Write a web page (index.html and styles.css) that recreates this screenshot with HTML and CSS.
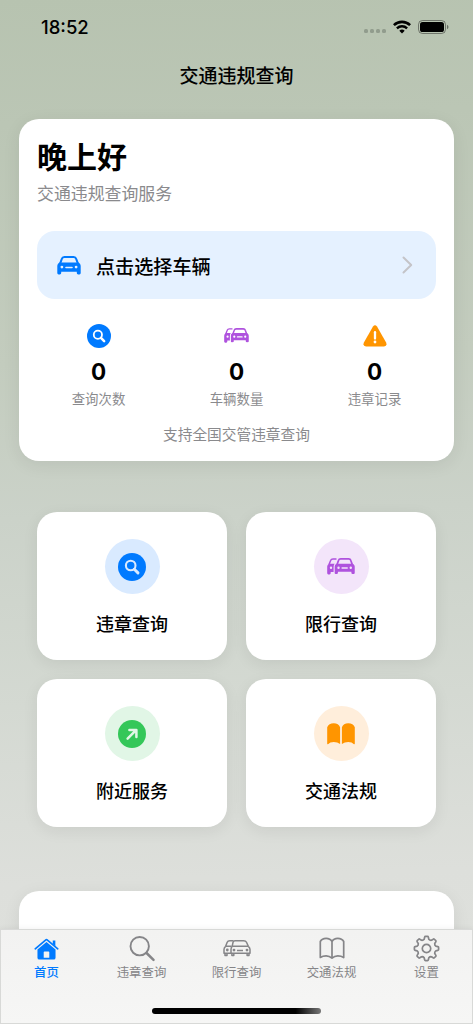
FILE: index.html
```html
<!DOCTYPE html>
<html lang="zh-CN">
<head>
<meta charset="utf-8">
<title>交通违规查询</title>
<link rel="stylesheet" href="styles.css">
</head>
<body>
<svg class="defs" width="0" height="0">
  <defs>
    <symbol id="car" viewBox="0 0 24 19">
      <path d="M3.200 7.400 4.800 2.900Q5.400 1 7.400 1H16.600Q18.600 1 19.200 2.900L20.800 7.400" fill="none" stroke="currentColor" stroke-width="2"/>
      <path fill="currentColor" fill-rule="evenodd" d="M.3 9.800Q.3 7.800 2.400 6.500H21.600Q23.700 7.800 23.700 9.800V17q0 1.400-1.300 1.400h-1.200Q19.800 18.400 19.800 17v-1.200H4.200V17q0 1.400-1.400 1.400H1.600Q.3 18.400.3 17zM4.900 9.700a1.400 1.400 0 1 0 0 2.800 1.400 1.400 0 0 0 0-2.800zM19.100 9.700a1.400 1.400 0 1 0 0 2.800 1.400 1.400 0 0 0 0-2.800zM9 10.700a.8.800 0 0 0 0 1.600h6a.8.800 0 0 0 0-1.600z"/>
    </symbol>
    <symbol id="cars" viewBox="0 0 28 17">
      <path d="M2 6.600 3.600 2.600Q4.200.9 6 .9H9.500" fill="none" stroke="currentColor" stroke-width="1.500"/>
      <path fill="currentColor" fill-rule="evenodd" d="M.2 8.600Q.2 6.800 2 5.700H7.600Q6.600 7.200 6.600 9V13.900H3.700V15.100q0 1.300-1.200 1.300H1.300q-1.100 0-1.100-1.300zM4 8.500a1.200 1.200 0 1 0 0 2.400 1.200 1.200 0 0 0 0-2.400z"/>
      <use href="#car" x="7.300" y="0" width="20.700" height="16.600"/>
    </symbol>
    <symbol id="search" viewBox="0 0 28 28">
      <circle cx="14" cy="14" r="14" fill="currentColor"/>
      <circle cx="12.700" cy="12.500" r="4.800" fill="none" stroke="var(--glyph, #fff)" stroke-width="2.100"/>
      <path d="m16.300 16.200 3.700 3.700" stroke="var(--glyph, #fff)" stroke-width="2.900" stroke-linecap="round"/>
    </symbol>
  </defs>
</svg>
<div class="screen">
  <header class="status">
    <span class="time">18:52</span>
    <span class="signals">
      <i class="dots"><b></b><b></b><b></b><b></b></i>
      <svg class="wifi" viewBox="0 0 18 14" width="18" height="14">
        <path d="M.9 5.100a11.700 11.700 0 0 1 16.200 0" fill="none" stroke="#000" stroke-width="2.600"/>
        <path d="M3.900 8.300a7.400 7.400 0 0 1 10.200 0" fill="none" stroke="#000" stroke-width="2.400"/>
        <path d="M6.300 10.800a4 4 0 0 1 5.400 0L9 13.600z"/>
      </svg>
      <svg class="battery" viewBox="0 0 31 14" width="31" height="14">
        <rect x=".5" y=".5" width="27" height="13" rx="4" fill="none" stroke="#000" stroke-opacity=".4"/>
        <rect x="2" y="2" width="24" height="10" rx="2.600"/>
        <path d="M29 4.700q1.500.8 1.500 2.300T29 9.300z" opacity=".45"/>
      </svg>
    </span>
  </header>
  <h1 class="nav-title">交通违规查询</h1>

  <main class="content">
    <section class="card summary">
      <h2 class="greeting">晚上好</h2>
      <p class="subtitle">交通违规查询服务</p>
      <div class="picker">
        <svg class="picker-car" width="24" height="19"><use href="#car"/></svg>
        <span class="picker-text">点击选择车辆</span>
        <svg class="chevron" width="11" height="18" viewBox="0 0 11 18"><path d="m1.500 1.500 7.700 7.500-7.700 7.500" fill="none" stroke="#c4c4c8" stroke-width="2" stroke-linecap="round" stroke-linejoin="round"/></svg>
      </div>
      <div class="stats">
        <div class="stat">
          <div class="stat-icon blue"><svg width="24" height="24"><use href="#search"/></svg></div>
          <div class="number">0</div><div class="caption">查询次数</div>
        </div>
        <div class="stat">
          <div class="stat-icon purple"><svg width="25" height="15.200"><use href="#cars"/></svg></div>
          <div class="number">0</div><div class="caption">车辆数量</div>
        </div>
        <div class="stat">
          <div class="stat-icon orange"><svg width="24" height="22" viewBox="0 0 24 22"><path fill="currentColor" d="M10 1.500q2-2.600 4 0l9.100 16q1.400 3.700-2.100 4H3q-3.500-.3-2.100-4z"/><path d="M12 7.200v6.400" stroke="#fff" stroke-width="2.300" stroke-linecap="round"/><circle cx="12" cy="17" r="1.400" fill="#fff"/></svg></div>
          <div class="number">0</div><div class="caption">违章记录</div>
        </div>
      </div>
      <p class="note">支持全国交管违章查询</p>
    </section>

    <section class="tiles">
      <div class="tile"><div class="badge blue"><svg width="28" height="28"><use href="#search"/></svg></div><span>违章查询</span></div>
      <div class="tile"><div class="badge purple"><svg width="28" height="17"><use href="#cars"/></svg></div><span>限行查询</span></div>
      <div class="tile"><div class="badge green"><svg width="28" height="28" viewBox="0 0 28 28"><circle cx="14" cy="14" r="14" fill="currentColor"/><path d="m9.600 18.600 8.200-8.200M11.400 10h7v7" fill="none" stroke="#e1f6e6" stroke-width="2.500" stroke-linecap="round" stroke-linejoin="round"/></svg></div><span>附近服务</span></div>
      <div class="tile"><div class="badge orange"><svg width="28" height="22" viewBox="0 0 28 22"><path fill="currentColor" d="M.2 4.200Q1.800.3 6.700.3t6.400 3.900V21Q10.500 19 6.700 19T1 21.200Q.2 21.500.2 20.600zM14.900 4.200Q16.400.3 21.300.3t6.500 3.900v16.400q0 .9-.8.6Q25 19 21.300 19t-6.400 2z"/></svg></div><span>交通法规</span></div>
    </section>

    <section class="card next"></section>
  </main>

  <nav class="tabbar">
    <div class="tab active">
      <svg width="25" height="23" viewBox="0 0 26 24"><path d="M1.300 12.300 12 3.200q1-.9 2 0l10.700 9.100" fill="none" stroke="currentColor" stroke-width="1.800" stroke-linecap="round"/><path fill="currentColor" d="M19.500 3.700h2.700v6l-2.700-2.300zM3.600 13l9.400-7.700 9.400 7.700V21.500q0 2-2 2H5.600q-2 0-2-2zM10.900 15q-.8 0-.8.800v5.700h5.800v-5.700q0-.8-.8-.8z" fill-rule="evenodd"/></svg>
      <span>首页</span>
    </div>
    <div class="tab">
      <svg width="26" height="26" viewBox="0 0 26 26"><circle cx="10.700" cy="10.700" r="9.200" fill="none" stroke="currentColor" stroke-width="1.900"/><path d="m17.500 17.500 7 6.800" stroke="currentColor" stroke-width="2.500" stroke-linecap="round"/></svg>
      <span>违章查询</span>
    </div>
    <div class="tab">
      <svg width="28" height="18" viewBox="0 0 28 18"><g fill="none" stroke="currentColor" stroke-width="1.500" stroke-linejoin="round"><path d="M10 2.800Q10.500 1.200 12 1.200h8.500Q22.800 1.200 23.500 2.800l1.800 4Q27 8.100 27 10v3.800H8V10Q8 8.100 9.200 6.800z"/><path d="M9.200 6.800h16.100M8.900 14v2h1.900v-2M24.100 14v2H26v-2M14 11.100h6"/><path d="M10.400 1.200H6.800Q4.800 1.200 4.200 2.800L2.600 6.800Q1 8 1 10v3.800h7M2.600 6.800h6M2 14v2h2v-2"/></g><g fill="currentColor"><circle cx="4.300" cy="10.500" r="1.400"/><circle cx="11" cy="10.600" r="1.400"/><circle cx="24" cy="10.600" r="1.400"/></g></svg>
      <span>限行查询</span>
    </div>
    <div class="tab">
      <svg width="26" height="22" viewBox="0 0 26 22"><path d="M13 4Q11.300.9 7.100.9T1.300 4V20q2.500-1.600 5.800-1.600T13 20.700q2.500-2.300 5.800-2.300t5.900 1.600V4Q23 .9 18.800.9T13 4zv16.500" fill="none" stroke="currentColor" stroke-width="1.700" stroke-linejoin="round"/></svg>
      <span>交通法规</span>
    </div>
    <div class="tab">
      <svg width="27" height="27" viewBox="-13.500 -13.500 27 27"><path d="M-2.320-9.310-1.870-11.300Q-1.700-12.100-1-12.100H1Q1.700-12.100 1.870-11.300L2.320-9.310Q3.300-8 4.940-8.220L6.670-9.310Q7.350-9.760 7.850-9.260L9.260-7.850Q9.760-7.350 9.310-6.670L8.220-4.940Q8-3.300 9.310-2.320L11.300-1.870Q12.100-1.700 12.100-1V1Q12.100 1.700 11.300 1.870L9.310 2.320Q8 3.300 8.220 4.940L9.310 6.670Q9.760 7.350 9.260 7.850L7.850 9.260Q7.350 9.760 6.670 9.310L4.940 8.220Q3.300 8 2.320 9.310L1.870 11.300Q1.700 12.100 1 12.100H-1Q-1.700 12.100-1.870 11.300L-2.320 9.310Q-3.300 8-4.940 8.220L-6.670 9.310Q-7.350 9.760-7.850 9.260L-9.260 7.850Q-9.760 7.350-9.310 6.670L-8.220 4.940Q-8 3.300-9.310 2.320L-11.300 1.870Q-12.100 1.700-12.100 1V-1Q-12.100-1.700-11.300-1.870L-9.310-2.320Q-8-3.300-8.220-4.940L-9.310-6.670Q-9.760-7.350-9.260-7.850L-7.850-9.260Q-7.350-9.760-6.670-9.310L-4.940-8.220Q-3.300-8-2.320-9.310z" fill="none" stroke="currentColor" stroke-width="1.700" stroke-linejoin="round"/><circle r="4.200" fill="none" stroke="currentColor" stroke-width="1.700"/></svg>
      <span>设置</span>
    </div>
    <div class="home-indicator"></div>
  </nav>
</div>
</body>
</html>
```
FILE: styles.css
```css
* { box-sizing: border-box; margin: 0; padding: 0; }
body { font-family: Inter, "Noto Sans CJK SC", sans-serif; color: #000; }
svg { display: block; }
.defs { position: absolute; }
.screen {
  position: relative;
  width: 473px;
  height: 1024px;
  overflow: hidden;
  background: linear-gradient(178deg, #b7c3b0 0%, #bbc6b5 12%, #c3ccbe 35%, #cbd2c9 50%, #d4d9d2 68%, #dddfdb 85%, #dfe1dd 100%);
}
.status {
  height: 53px;
  padding: 0 24px 0 41px;
  display: flex;
  justify-content: space-between;
  align-items: center;
}
.time { font-size: 18.500px; font-weight: 550; line-height: 22px; }
.signals { display: flex; align-items: center; }
.dots { display: flex; gap: 2px; margin: 9px 7px 0 0; }
.dots b { width: 4px; height: 4px; border-radius: 1.5px; background: #919c8d; }
.wifi { margin-right: 7px; }
.nav-title { height: 66px; padding-top: 10px; font-size: 19px; line-height: 28px; font-weight: 500; text-align: center; }
.content { padding: 0 19px; }
.card { background: #fff; border-radius: 20px; box-shadow: 0 4px 18px rgba(0, 0, 0, .07); }
.summary { height: 342px; padding: 18px 18px 0; }
.greeting { font-size: 30px; line-height: 40px; font-weight: 700; }
.subtitle { margin-top: 5px; font-size: 16.900px; line-height: 24px; color: #8a8a8d; }
.picker {
  margin-top: 25px;
  height: 68px;
  padding: 0 23px 0 20px;
  border-radius: 18px;
  background: #e5f1ff;
  display: flex;
  align-items: center;
}
.picker-car { color: #007aff; }
.picker-text { margin-left: 15px; padding-top: 3px; font-size: 19.100px; line-height: 28px; font-weight: 500; }
.chevron { margin-left: auto; }
.stats { margin-top: 25px; display: grid; grid-template-columns: repeat(3, 1fr); gap: 15px; text-align: center; }
.stat-icon { height: 24px; display: flex; align-items: center; justify-content: center; }
.number { margin-top: 10px; font-size: 22.500px; line-height: 28px; font-weight: 700; }
.caption { margin-top: 3px; font-size: 13.400px; line-height: 20px; color: #8a8a8d; }
.note { margin-top: 15px; font-size: 14.700px; line-height: 22px; color: #8a8a8d; text-align: center; }
.blue { color: #007aff; }
.purple { color: #af52de; }
.orange { color: #ff9500; }
.green { color: #34c759; }
.tiles { margin-top: 51px; padding: 0 18px; display: grid; grid-template-columns: 1fr 1fr; gap: 19px; }
.tile {
  height: 148px;
  padding-top: 27px;
  border-radius: 20px;
  background: #fff;
  box-shadow: 0 4px 16px rgba(0, 0, 0, .07);
  display: flex;
  flex-direction: column;
  align-items: center;
}
.tile span { margin-top: 17px; font-size: 18px; line-height: 27px; font-weight: 500; }
.badge { width: 55px; height: 55px; border-radius: 50%; display: flex; align-items: center; justify-content: center; }
.badge.blue { background: #d9eaff; --glyph: #d9eaff; }
.badge.purple { background: #f3e5fa; }
.badge.green { background: #e1f6e6; }
.badge.orange { background: #ffeedb; }
.next { margin-top: 64px; height: 180px; }
.tabbar {
  position: absolute;
  left: 0;
  bottom: 0;
  width: 473px;
  height: 95px;
  padding-top: 5px;
  border: 1px solid #d8d9d7;
  background: linear-gradient(#f2f2f1, #f6f6f5);
  box-shadow: 0 -1px 5px rgba(0, 0, 0, .05);
  display: grid;
  grid-template-columns: repeat(5, 95px);
  justify-content: center;
  grid-template-rows: 66px 8px;
}
.tab { display: flex; flex-direction: column; align-items: center; color: #858588; }
.tab svg { height: 27px; }
.tab span { margin-top: 2px; font-size: 12.400px; line-height: 18px; }
.tab.active { color: #007aff; }
.tab.active span { font-weight: 500; }
.home-indicator {
  grid-column: 1 / -1;
  justify-self: center;
  align-self: end;
  width: 169px;
  height: 6px;
  margin-bottom: -5px;
  border-radius: 3px;
  background: linear-gradient(90deg, #000 85%, #777);
}
```
